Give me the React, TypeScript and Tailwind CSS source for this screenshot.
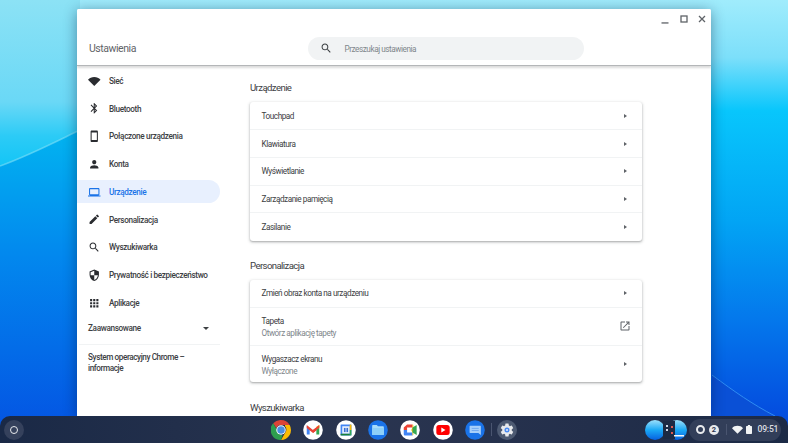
const P = {
  wifi: "M12 4C7.3 4 3.05 5.9 0 9l12 12 12-12c-3.05-3.1-7.3-5-12-5z",
  bt: "M17.71 7.71L12 2h-1v7.59L6.41 5 5 6.41 10.59 12 5 17.59 6.41 19 11 14.41V22h1l5.71-5.71-4.3-4.29 4.3-4.29zM13 5.83l1.88 1.88L13 9.59V5.83zm1.88 10.46L13 18.17v-3.76l1.88 1.88z",
  phone: "M17 1.01L7 1c-1.1 0-2 .9-2 2v18c0 1.1.9 2 2 2h10c1.1 0 2-.9 2-2V3c0-1.1-.9-1.99-2-1.99zM17 19H7V5h10v14z",
  person: "M12 12c2.21 0 4-1.79 4-4s-1.79-4-4-4-4 1.79-4 4 1.79 4 4 4zm0 2c-2.67 0-8 1.34-8 4v2h16v-2c0-2.66-5.33-4-8-4z",
  laptop: "M20 18c1.1 0 1.99-.9 1.99-2L22 6c0-1.1-.9-2-2-2H4c-1.1 0-2 .9-2 2v10c0 1.1.9 2 2 2H0v2h24v-2h-4zM4 6h16v10H4V6z",
  brush: "M3 17.25V21h3.75L17.81 9.94l-3.75-3.75L3 17.25zM20.71 7.04a1 1 0 0 0 0-1.41l-2.34-2.34a1 1 0 0 0-1.41 0l-1.83 1.83 3.75 3.75 1.83-1.83z",
  search: "M15.5 14h-.79l-.28-.27C15.41 12.59 16 11.11 16 9.5 16 5.91 13.09 3 9.5 3S3 5.91 3 9.5 5.91 16 9.5 16c1.61 0 3.09-.59 4.23-1.57l.27.28v.79l5 4.99L20.49 19l-4.99-5zm-6 0C7.01 14 5 11.99 5 9.5S7.01 5 9.5 5 14 7.01 14 9.5 11.99 14 9.5 14z",
  shield: "M12 1L3 5v6c0 5.55 3.84 10.74 9 12 5.16-1.26 9-6.45 9-12V5l-9-4zm0 10.99h7c-.53 4.12-3.28 7.79-7 8.94V12H5V6.3l7-3.11v8.8z",
  apps: "M4 8h4V4H4v4zm6 12h4v-4h-4v4zm-6 0h4v-4H4v4zm0-6h4v-4H4v4zm6 0h4v-4h-4v4zm6-10v4h4V4h-4zm-6 4h4V4h-4v4zm6 6h4v-4h-4v4zm0 6h4v-4h-4v4z",
  open: "M19 19H5V5h7V3H5c-1.11 0-2 .9-2 2v14c0 1.1.89 2 2 2h14c1.1 0 2-.9 2-2v-7h-2v7zM14 3v2h3.59l-9.83 9.83 1.41 1.41L19 6.41V10h2V3h-7z",
};

function Ico({ d, className }: { d: string; className: string }) {
  return (
    <svg viewBox="0 0 24 24" className={className} fill="currentColor">
      <path d={d} />
    </svg>
  );
}

function Wallpaper() {
  return (
    <svg className="absolute inset-0 w-full h-full" viewBox="0 0 788 443" preserveAspectRatio="none">
      <defs>
        <linearGradient id="wp" x1="0" y1="0" x2="0" y2="1">
          <stop offset="0" stopColor="#a0ecfc" />
          <stop offset="0.13" stopColor="#7cdffa" />
          <stop offset="0.25" stopColor="#08c6fc" />
          <stop offset="0.5" stopColor="#02a4f4" />
          <stop offset="0.72" stopColor="#0478ec" />
          <stop offset="0.92" stopColor="#0450e0" />
          <stop offset="1" stopColor="#0448d8" />
        </linearGradient>
        <linearGradient id="lt" x1="0" y1="0" x2="0" y2="1">
          <stop offset="0" stopColor="#8ce2f5" />
          <stop offset="0.6" stopColor="#6ad8f6" />
          <stop offset="0.8" stopColor="#2ccbf6" />
          <stop offset="1" stopColor="#10c4f6" />
        </linearGradient>
        <linearGradient id="lo" x1="0" y1="0" x2="0" y2="1">
          <stop offset="0" stopColor="#02b4f0" />
          <stop offset="0.4" stopColor="#0288ee" />
          <stop offset="1" stopColor="#0450e2" />
        </linearGradient>
      </defs>
      <rect width="788" height="443" fill="url(#wp)" />
      <rect x="0" y="0" width="80" height="170" fill="url(#lt)" />
      <path d="M0 166 C30 155 55 142 80 130 L80 443 L0 443 Z" fill="url(#lo)" />
      <path d="M0 166 C30 155 55 142 80 130" stroke="#7fe0f6" strokeWidth="1.5" fill="none" opacity="0.6" />
      <path d="M712 375 C735 392 752 404 775 416 L712 416 Z" fill="#0a50d6" />
      <path d="M712 375 C735 392 752 404 775 416" stroke="#2f8cf2" strokeWidth="1" fill="none" />
    </svg>
  );
}

function NavItem({ d, label, active }: { d: string; label: string; active?: boolean }) {
  return (
    <div className="h-[27.75px] flex items-center">
      <div className={`h-[23px] w-[143px] flex items-center pl-[11px] rounded-r-full ${active ? "bg-[#e8f0fe] text-[#1a73e8]" : "text-[#3c4043]"}`}>
        <Ico d={d} className={`w-[12.5px] h-[12.5px] shrink-0 ${active ? "text-[#1a73e8]" : "text-[#2a2c30]"}`} />
        <span className="ml-[8.5px] text-[8.2px] tracking-[-0.36px] font-medium whitespace-nowrap pt-[0.4px]">{label}</span>
      </div>
    </div>
  );
}

function Arrow() {
  return <div className="w-0 h-0 border-y-[2.6px] border-y-transparent border-l-[3px] border-l-[#5f6368] mr-[15px]" />;
}

function Row({ label, sub, right, h, last }: { label: string; sub?: string; right?: React.ReactNode; h: string; last?: boolean }) {
  return (
    <div className={`${h} flex items-center justify-between pl-[11.5px] ${last ? "" : "border-b border-[#f1f3f4]"}`}>
      <div className={`flex flex-col tracking-[-0.45px] ${sub ? "pt-[3.5px]" : "pt-[1.5px]"}`}>
        <span className="text-[8.2px] text-[#3c4043] leading-[11.5px]">{label}</span>
        {sub && <span className="text-[8.2px] text-[#80868b] leading-[11.5px]">{sub}</span>}
      </div>
      {right ?? <Arrow />}
    </div>
  );
}

function Card({ children, mb }: { children: React.ReactNode; mb: string }) {
  return (
    <div className={`w-[392px] bg-white rounded-[3px] shadow-[0_1px_2px_rgba(60,64,67,0.35),0_1px_3px_1px_rgba(60,64,67,0.12)] ${mb}`}>
      {children}
    </div>
  );
}

function Heading({ children }: { children: React.ReactNode }) {
  return <div className="text-[9.6px] text-[#3c4043] leading-[16px] h-[14px] tracking-[-0.6px]">{children}</div>;
}

function Chrome() {
  return (
    <svg viewBox="4 4 40 40" className="w-[20px] h-[20px]">
      <path d="M24 4a20 20 0 0 1 17.3 10H24a10 10 0 0 0-9.3 6.3L8.4 10.6A20 20 0 0 1 24 4z" fill="#db4437" />
      <path d="M41.3 14A20 20 0 0 1 24 44l8.6-15A10 10 0 0 0 32 16.5V14z" fill="#fbbc04" />
      <path d="M24 44A20 20 0 0 1 8.4 10.6l8.6 15a10 10 0 0 0 10 8.3z" fill="#2e9e4f" />
      <circle cx="24" cy="24" r="9.5" fill="#fff" />
      <circle cx="24" cy="24" r="7.5" fill="#4a90e2" />
    </svg>
  );
}
function Gmail() {
  return (
    <svg viewBox="0 0 48 48" className="w-[20px] h-[20px]">
      <circle cx="24" cy="24" r="23.5" fill="#fff" />
      <path d="M9 14v21h7V22z" fill="#4285f4" />
      <path d="M39 14v21h-7V22z" fill="#34a853" />
      <path d="M32 22v-6l7-4v7z" fill="#fbbc04" />
      <path d="M9 12l15 12 8-6v7l-8 6-15-12z" fill="#ea4335" />
      <path d="M24 24l15-12v6L24 31z" fill="#ea4335" />
    </svg>
  );
}
function Calendar() {
  return (
    <svg viewBox="0 0 48 48" className="w-[20px] h-[20px]">
      <circle cx="24" cy="24" r="23.5" fill="#fff" />
      <rect x="11" y="11" width="26" height="26" fill="#4285f4" rx="1" />
      <rect x="15" y="15" width="18" height="18" fill="#e8f0fe" />
      <rect x="19" y="19" width="4" height="10" fill="#3a6fd0" />
      <rect x="25" y="19" width="4" height="10" fill="#3a6fd0" />
      <rect x="33" y="11" width="4" height="13" fill="#fbbc04" />
      <rect x="33" y="24" width="4" height="13" fill="#34a853" />
      <rect x="11" y="33" width="22" height="4" fill="#188038" />
    </svg>
  );
}
function Files() {
  return (
    <svg viewBox="0 0 48 48" className="w-[20px] h-[20px]">
      <circle cx="24" cy="24" r="23.5" fill="#1a73e8" />
      <path d="M10 14a2 2 0 0 1 2-2h9l3 3h12a2 2 0 0 1 2 2v17a2 2 0 0 1-2 2H12a2 2 0 0 1-2-2z" fill="#a8dcfa" />
      <path d="M10 19h28v15a2 2 0 0 1-2 2H12a2 2 0 0 1-2-2z" fill="#8ed0f8" />
    </svg>
  );
}
function Meet() {
  return (
    <svg viewBox="0 0 48 48" className="w-[20px] h-[20px]">
      <circle cx="24" cy="24" r="23.5" fill="#fff" />
      <path d="M17 11h13v7H17v6H9v-6z" fill="#ea4335" />
      <path d="M9 24h8v6h13v7H12a3 3 0 0 1-3-3z" fill="#4285f4" />
      <path d="M30 11a2 2 0 0 1 2 2v22a2 2 0 0 1-2 2v-7l-3-6 3-6z" fill="#fbbc04" />
      <path d="M30 18l10-6v24l-10-6z" fill="#34a853" />
    </svg>
  );
}
function Youtube() {
  return (
    <svg viewBox="0 0 48 48" className="w-[20px] h-[20px]">
      <circle cx="24" cy="24" r="23.5" fill="#fff" />
      <rect x="8" y="12" width="32" height="24" rx="6" fill="#f00" />
      <path d="M20 18l10 6-10 6z" fill="#fff" />
    </svg>
  );
}
function Messages() {
  return (
    <svg viewBox="0 0 48 48" className="w-[20px] h-[20px]">
      <circle cx="24" cy="24" r="23.5" fill="#1a73e8" />
      <path d="M12 14h25a1 1 0 0 1 1 1v21l-6-5H12a1 1 0 0 1-1-1V15a1 1 0 0 1 1-1z" fill="#a8d0fa" />
      <rect x="16" y="19" width="17" height="2" fill="#6aa4f0" />
      <rect x="16" y="24" width="17" height="2" fill="#6aa4f0" />
    </svg>
  );
}
function Gear() {
  return (
    <svg viewBox="0 0 24 24" className="w-[16px] h-[16px]">
      <path
        d="M19.14 12.94c.04-.3.06-.61.06-.94s-.02-.64-.07-.94l2.03-1.58a.49.49 0 0 0 .12-.61l-1.92-3.32a.49.49 0 0 0-.59-.22l-2.39.96c-.5-.38-1.03-.7-1.62-.94l-.36-2.54a.48.48 0 0 0-.48-.41h-3.84a.48.48 0 0 0-.47.41l-.36 2.54c-.59.24-1.13.57-1.62.94l-2.39-.96a.49.49 0 0 0-.59.22L2.74 8.87a.48.48 0 0 0 .12.61l2.03 1.58c-.05.3-.09.63-.09.94s.02.64.07.94l-2.03 1.58a.49.49 0 0 0-.12.61l1.92 3.32c.12.22.37.29.59.22l2.39-.96c.5.38 1.03.7 1.62.94l.36 2.54c.05.24.24.41.48.41h3.84c.24 0 .44-.17.47-.41l.36-2.54c.59-.24 1.13-.56 1.62-.94l2.39.96c.22.08.47 0 .59-.22l1.92-3.32a.48.48 0 0 0-.12-.61z"
        fill="#e8eaed"
      />
      <circle cx="12" cy="12" r="3.8" fill="#4a8af0" />
      <circle cx="12" cy="12" r="1.6" fill="#dbe6fa" />
    </svg>
  );
}

function Thumb() {
  return (
    <svg viewBox="0 0 44 20" className="w-[44px] h-[20px]">
      <defs>
        <linearGradient id="th" x1="0" y1="0" x2="0" y2="1">
          <stop offset="0" stopColor="#9ce0fb" />
          <stop offset="0.5" stopColor="#1aa8f5" />
          <stop offset="1" stopColor="#0660e0" />
        </linearGradient>
      </defs>
      <circle cx="10" cy="10" r="10" fill="url(#th)" />
      <circle cx="32" cy="10" r="10" fill="url(#th)" />
      <rect x="18" y="1" width="12" height="18" fill="#1c2a44" />
      <rect x="21" y="5" width="2" height="2" fill="#cfd8e6" />
      <rect x="21" y="9" width="2" height="2" fill="#cfd8e6" />
      <rect x="26" y="6" width="2" height="2" fill="#e05a50" />
      <rect x="26" y="12" width="2" height="2" fill="#e05a50" />
      <rect x="29" y="15" width="10" height="1.5" fill="#f4f6f8" />
    </svg>
  );
}

function Shelf() {
  return (
    <div className="absolute left-0 right-0 bottom-0 h-[27px] rounded-t-[10px] bg-[linear-gradient(90deg,#1a2946,#2a3550_45%,#232f4b_75%,#1c2a46)] flex items-center z-10">
      <div className="w-[20px] h-[20px] rounded-full bg-[#35415c] ml-[4px] flex items-center justify-center">
        <div className="w-[8px] h-[8px] rounded-full border border-[#e8eaed]" />
      </div>
      <div className="ml-[241px] flex items-center">
        <div className="w-[32.3px] flex justify-center"><Chrome /></div>
        <div className="w-[32.3px] flex justify-center"><Gmail /></div>
        <div className="w-[32.3px] flex justify-center"><Calendar /></div>
        <div className="w-[32.3px] flex justify-center"><Files /></div>
        <div className="w-[32.3px] flex justify-center"><Meet /></div>
        <div className="w-[32.3px] flex justify-center"><Youtube /></div>
        <div className="w-[32.3px] flex justify-center"><Messages /></div>
        <div className="w-[1px] h-[13px] bg-[#4a5570]" />
        <div className="w-[30px] flex flex-col items-center relative">
          <div className="w-[20px] h-[20px] rounded-full bg-[#4d5a72] flex items-center justify-center"><Gear /></div>
          <div className="absolute top-[23px] w-[8px] h-[1.5px] bg-[#e8eaed]" />
        </div>
      </div>
      <div className="ml-[122.9px]"><Thumb /></div>
      <div className="w-[92px] h-[22px] rounded-full bg-[#323e59] flex items-center text-[#e8eaed]">
        <div className="ml-[7px] w-[9px] h-[9px] rounded-full border-[2.5px] border-[#e8eaed]" />
        <div className="ml-[4px] w-[10px] h-[10px] rounded-full bg-[#e8eaed] text-[#2a3550] text-[7.5px] font-bold flex items-center justify-center leading-none">2</div>
        <div className="ml-[7px] w-[1px] h-[11px] bg-[#4a5570]" />
        <Ico d={P.wifi} className="ml-[5px] w-[11px] h-[11px] text-[#f1f3f4]" />
        <svg viewBox="0 0 8 12" className="ml-[3.5px] w-[6px] h-[9px]">
          <path d="M2.5 0h3v1.2H7a1 1 0 0 1 1 1V11a1 1 0 0 1-1 1H1a1 1 0 0 1-1-1V2.2a1 1 0 0 1 1-1h1.500z" fill="#f1f3f4" />
        </svg>
        <span className="ml-[5px] text-[8.6px] font-medium text-[#dadce0] tracking-[-0.2px]">09:51</span>
      </div>
    </div>
  );
}

export default function App() {
  return (
    <div className="relative w-[788px] h-[443px] overflow-hidden font-['Roboto',sans-serif]">
      <Wallpaper />
      <div className="absolute left-[77px] top-[9px] w-[634px] h-[407px] bg-white rounded-t-[2px] shadow-[0_2px_14px_rgba(0,20,50,0.42)] flex flex-col overflow-hidden">
        <div className="relative h-[57px] shrink-0 border-b border-[#b4b6b8] shadow-[0_1.5px_2px_rgba(0,0,0,0.14)] z-[1] bg-white">
          <div className="flex justify-end items-center gap-[8.4px] pr-[4px] pt-[5px] h-[14px]">
            <svg viewBox="0 0 10 10" className="w-[10px] h-[10px]"><rect x="1.5" y="8.3" width="7" height="1.3" fill="#5f6368" /></svg>
            <svg viewBox="0 0 10 10" className="w-[10px] h-[10px]"><rect x="2" y="2" width="6" height="6" fill="none" stroke="#5f6368" strokeWidth="1.3" /></svg>
            <svg viewBox="0 0 10 10" className="w-[10px] h-[10px]"><path d="M2 2l6 6M8 2l-6 6" stroke="#5f6368" strokeWidth="1.3" /></svg>
          </div>
          <div className="flex items-center pl-[12px] pt-[14px]">
            <span className="w-[219px] text-[10.5px] text-[#5f6368] tracking-[-0.45px]">Ustawienia</span>
            <div className="w-[276px] h-[23px] rounded-full bg-[#f1f3f4] flex items-center pl-[11.5px]">
              <Ico d={P.search} className="w-[12.5px] h-[12.5px] text-[#3c4043]" />
              <span className="ml-[12.5px] text-[8.2px] text-[#80868b] tracking-[-0.45px] pt-[1px]">Przeszukaj ustawienia</span>
            </div>
          </div>
        </div>
        <div className="flex flex-1 min-h-0">
          <div className="w-[173px] shrink-0 pt-px">
            <NavItem d={P.wifi} label="Sieć" />
            <NavItem d={P.bt} label="Bluetooth" />
            <NavItem d={P.phone} label="Połączone urządzenia" />
            <NavItem d={P.person} label="Konta" />
            <NavItem d={P.laptop} label="Urządzenie" active />
            <NavItem d={P.brush} label="Personalizacja" />
            <NavItem d={P.search} label="Wyszukiwarka" />
            <NavItem d={P.shield} label="Prywatność i bezpieczeństwo" />
            <NavItem d={P.apps} label="Aplikacje" />
            <div className="w-[143px] h-[22.5px] flex items-center justify-between pl-[11px] pr-[11px] text-[#3c4043]">
              <span className="text-[8.2px] font-medium tracking-[-0.36px] pt-[1px]">Zaawansowane</span>
              <div className="w-0 h-0 border-x-[3px] border-x-transparent border-t-[3px] border-t-[#3c4043]" />
            </div>
            <div className="ml-[2px] w-[141px] h-px bg-[#f1f3f4] mt-[4.75px]" />
            <div className="pl-[11px] pt-[6.5px] w-[130px] text-[8.2px] font-medium leading-[11.5px] tracking-[-0.42px] text-[#3c4043]">
              System operacyjny Chrome – informacje
            </div>
          </div>
          <div className="flex-1 pt-[14px]">
            <Heading>Urządzenie</Heading>
            <div className="h-[8px]" />
            <Card mb="mb-[17px]">
              <Row label="Touchpad" h="h-[28px]" />
              <Row label="Klawiatura" h="h-[28px]" />
              <Row label="Wyświetlanie" h="h-[27.5px]" />
              <Row label="Zarządzanie pamięcią" h="h-[27.5px]" />
              <Row label="Zasilanie" h="h-[28px]" last />
            </Card>
            <Heading>Personalizacja</Heading>
            <div className="h-[8px]" />
            <Card mb="mb-[18px]">
              <Row label="Zmień obraz konta na urządzeniu" h="h-[27.5px]" />
              <Row
                label="Tapeta"
                sub="Otwórz aplikację tapety"
                h="h-[38px]"
                right={<Ico d={P.open} className="w-[12px] h-[12px] text-[#5f6368] mr-[11px]" />}
              />
              <Row label="Wygaszacz ekranu" sub="Wyłączone" h="h-[36.5px]" last />
            </Card>
            <Heading>Wyszukiwarka</Heading>
          </div>
        </div>
      </div>
      <Shelf />
    </div>
  );
}
